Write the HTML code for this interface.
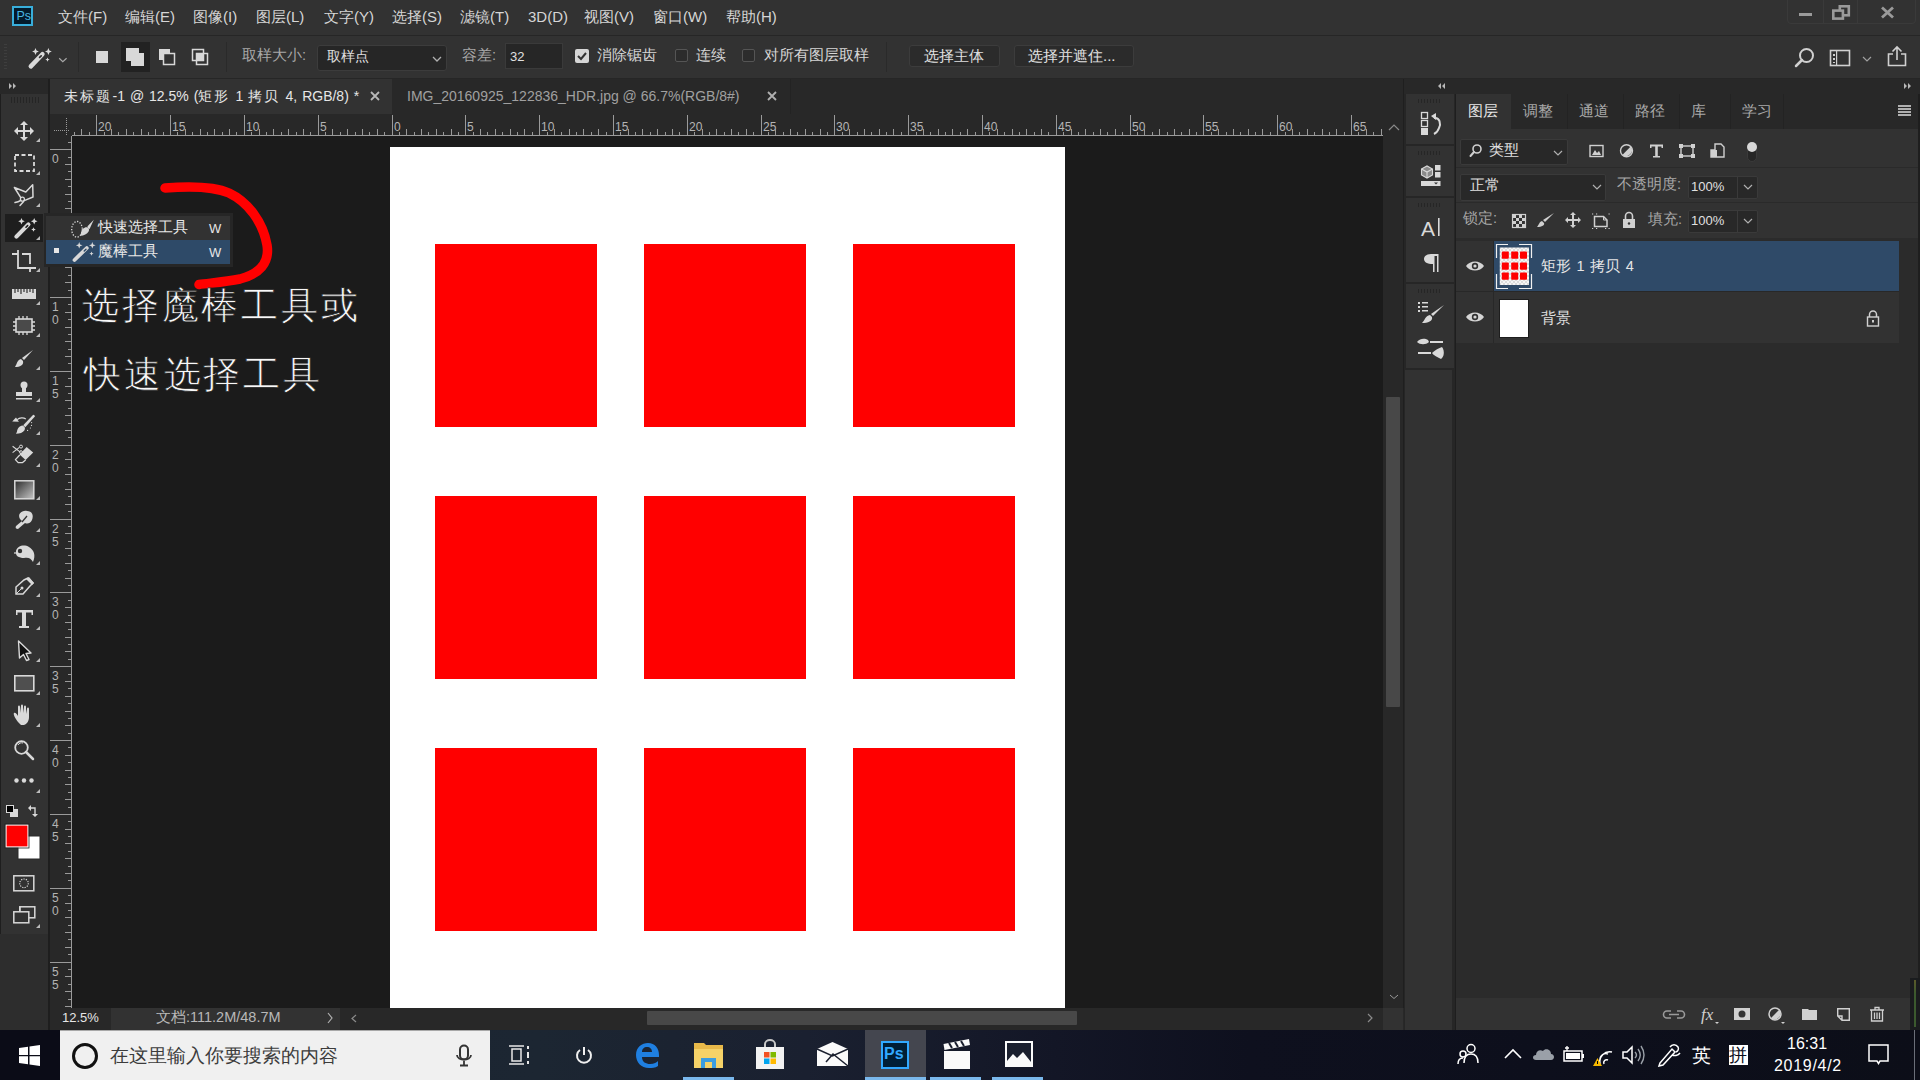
<!DOCTYPE html>
<html><head><meta charset="utf-8"><style>
*{margin:0;padding:0;box-sizing:border-box}
html,body{width:1920px;height:1080px;overflow:hidden;background:#1e1e1e;font-family:'Liberation Sans',sans-serif;}
.a{position:absolute}
.t{position:absolute;white-space:nowrap;line-height:1}
svg{display:block}
</style></head><body>

<div class="a" style="left:0;top:0;width:1920px;height:35px;background:#323232"></div>
<div class="a" style="left:0;top:35px;width:1920px;height:1px;background:#262626"></div>
<div class="a" style="left:12px;top:6px;width:20.5px;height:20px;background:#041a2a;border:2px solid #38aedb"></div>
<div class="t" style="left:16.5px;top:9.5px;font-size:12.5px;color:#48b6e2">Ps</div>
<div class="t" style="left:58px;top:9px;font-size:15px;color:#d6d6d6">文件(F)</div>
<div class="t" style="left:125px;top:9px;font-size:15px;color:#d6d6d6">编辑(E)</div>
<div class="t" style="left:193px;top:9px;font-size:15px;color:#d6d6d6">图像(I)</div>
<div class="t" style="left:256px;top:9px;font-size:15px;color:#d6d6d6">图层(L)</div>
<div class="t" style="left:324px;top:9px;font-size:15px;color:#d6d6d6">文字(Y)</div>
<div class="t" style="left:392px;top:9px;font-size:15px;color:#d6d6d6">选择(S)</div>
<div class="t" style="left:460px;top:9px;font-size:15px;color:#d6d6d6">滤镜(T)</div>
<div class="t" style="left:528px;top:9px;font-size:15px;color:#d6d6d6">3D(D)</div>
<div class="t" style="left:584px;top:9px;font-size:15px;color:#d6d6d6">视图(V)</div>
<div class="t" style="left:653px;top:9px;font-size:15px;color:#d6d6d6">窗口(W)</div>
<div class="t" style="left:726px;top:9px;font-size:15px;color:#d6d6d6">帮助(H)</div>
<div class="a" style="left:1787px;top:-4px;width:129px;height:28px;border:1px solid #3a3a3a;border-radius:4px"></div>
<div class="a" style="left:1823px;top:0;width:1px;height:23px;background:#3a3a3a"></div>
<div class="a" style="left:1857px;top:0;width:1px;height:23px;background:#3a3a3a"></div>
<div class="a" style="left:1799px;top:13px;width:13px;height:3px;background:#9a9a9a"></div>
<svg class="a" style="left:1830px;top:3px" width="22" height="19" viewBox="1830 3 22 19"><rect x="1839.8" y="6.3" width="9" height="9" fill="none" stroke="#9a9a9a" stroke-width="2.6"/><rect x="1833.3" y="10.6" width="9.6" height="8" fill="#323232" stroke="#9a9a9a" stroke-width="2.6"/></svg>
<svg class="a" style="left:1880px;top:6px" width="15" height="13"><path d="M2 1.5L13 11.5M13 1.5L2 11.5" stroke="#9a9a9a" stroke-width="2.8"/></svg>
<div class="a" style="left:0;top:36px;width:1920px;height:42px;background:#323232"></div>
<div class="a" style="left:0;top:78px;width:1920px;height:1px;background:#262626"></div>
<div class="a" style="left:4px;top:44px;width:3px;height:26px;background:repeating-linear-gradient(#3e3e3e 0 1px,transparent 1px 3px)"></div>
<svg class="a" style="left:0;top:36px" width="80" height="42" viewBox="0 36 80 42"><path d="M30.8 66.4 L42.4 54.2" stroke="#d9d9d9" stroke-width="4.5" stroke-linecap="round"/><path d="M39.6 57.4 L41.2 55.8" stroke="#323232" stroke-width="1.71" stroke-linecap="round"/><path d="M35.50 48.10 L36.52 50.48 L38.90 51.50 L36.52 52.52 L35.50 54.90 L34.48 52.52 L32.10 51.50 L34.48 50.48Z M48.40 48.10 L49.42 50.48 L51.80 51.50 L49.42 52.52 L48.40 54.90 L47.38 52.52 L45.00 51.50 L47.38 50.48Z M47.50 57.40 L48.16 58.94 L49.70 59.60 L48.16 60.26 L47.50 61.80 L46.84 60.26 L45.30 59.60 L46.84 58.94Z" fill="#d9d9d9"/><path d="M59.2 58.3 L62.8 61.6 L66.6 58.3" fill="none" stroke="#a8a8a8" stroke-width="1.2"/></svg>
<div class="a" style="left:78px;top:42px;width:1px;height:30px;background:#2a2a2a"></div>
<div class="a" style="left:96px;top:51px;width:12px;height:12px;background:#d8d8d8"></div>
<div class="a" style="left:121px;top:42px;width:29px;height:30px;background:#222"></div>
<div class="a" style="left:126px;top:48px;width:13px;height:13px;background:#d8d8d8"></div>
<div class="a" style="left:131px;top:53px;width:13px;height:13px;background:#d8d8d8"></div>
<svg class="a" style="left:158px;top:48px" width="18" height="18"><rect x="1" y="1" width="11" height="11" fill="#d8d8d8"/><rect x="5.5" y="5.5" width="11" height="11" fill="#323232" stroke="#d8d8d8" stroke-width="1.5"/></svg>
<svg class="a" style="left:191px;top:48px" width="18" height="18"><rect x="1.5" y="1.5" width="11" height="11" fill="none" stroke="#d8d8d8" stroke-width="1.5"/><rect x="5.5" y="5.5" width="11" height="11" fill="none" stroke="#d8d8d8" stroke-width="1.5"/><rect x="5.5" y="5.5" width="7" height="7" fill="#d8d8d8"/></svg>
<div class="a" style="left:226px;top:42px;width:1px;height:30px;background:#2a2a2a"></div>
<div class="t" style="left:242px;top:48px;font-size:14.7px;color:#a8a8a8">取样大小:</div>
<div class="a" style="left:317px;top:45px;width:130px;height:26px;background:#262626;border:1px solid #3c3c3c;border-radius:3px"></div>
<div class="t" style="left:327px;top:49px;font-size:14px;color:#e0e0e0">取样点</div>
<svg class="a" style="left:432px;top:56px" width="10" height="7"><path d="M1 1L5 5L9 1" fill="none" stroke="#b0b0b0" stroke-width="1.3"/></svg>
<div class="t" style="left:462px;top:48px;font-size:14.7px;color:#a8a8a8">容差:</div>
<div class="a" style="left:505px;top:43px;width:58px;height:26px;background:#262626;border:1px solid #3a3a3a"></div>
<div class="t" style="left:510px;top:50px;font-size:13px;color:#e0e0e0">32</div>
<div class="a" style="left:575px;top:49px;width:14px;height:14px;background:#d6d6d6;border-radius:2px"></div>
<svg class="a" style="left:575px;top:49px" width="14" height="14"><path d="M3 7L6 10L11 4" fill="none" stroke="#333" stroke-width="2"/></svg>
<div class="t" style="left:597px;top:48px;font-size:14.7px;color:#d6d6d6">消除锯齿</div>
<div class="a" style="left:675px;top:49px;width:13px;height:13px;border:1px solid #555;border-radius:2px;background:#2c2c2c"></div>
<div class="t" style="left:696px;top:48px;font-size:14.7px;color:#d6d6d6">连续</div>
<div class="a" style="left:742px;top:49px;width:13px;height:13px;border:1px solid #555;border-radius:2px;background:#2c2c2c"></div>
<div class="t" style="left:764px;top:48px;font-size:14.7px;color:#d6d6d6">对所有图层取样</div>
<div class="a" style="left:886px;top:42px;width:1px;height:30px;background:#2a2a2a"></div>
<div class="a" style="left:909px;top:45px;width:91px;height:22px;background:#2b2b2b;border:1px solid #3c3c3c;border-radius:3px"></div>
<div class="t" style="left:924px;top:48px;font-size:15px;color:#e0e0e0">选择主体</div>
<div class="a" style="left:1014px;top:45px;width:120px;height:22px;background:#2b2b2b;border:1px solid #3c3c3c;border-radius:3px"></div>
<div class="t" style="left:1028px;top:48px;font-size:15px;color:#e0e0e0">选择并遮住...</div>
<svg class="a" style="left:1794px;top:47px" width="22" height="21"><circle cx="12.5" cy="8.5" r="6.5" fill="none" stroke="#d0d0d0" stroke-width="2"/><path d="M8 13L2 19" stroke="#d0d0d0" stroke-width="2.5" stroke-linecap="round"/></svg>
<svg class="a" style="left:1829px;top:49px" width="23" height="18"><rect x="1.5" y="1.5" width="19" height="15" fill="none" stroke="#d0d0d0" stroke-width="1.6"/><rect x="4" y="5" width="2" height="2" fill="#d0d0d0"/><rect x="4" y="9" width="2" height="2" fill="#d0d0d0"/><rect x="4" y="13" width="2" height="1" fill="#d0d0d0"/><rect x="7" y="2" width="1.2" height="14" fill="#d0d0d0"/></svg>
<svg class="a" style="left:1862px;top:56px" width="10" height="7"><path d="M1 1L5 5L9 1" fill="none" stroke="#a0a0a0" stroke-width="1.2"/></svg>
<svg class="a" style="left:1886px;top:45px" width="22" height="22"><path d="M7 9H2.5V20.5H19.5V9H15" fill="none" stroke="#d0d0d0" stroke-width="1.6"/><path d="M11 15V2M6.5 6.5L11 2L15.5 6.5" fill="none" stroke="#d0d0d0" stroke-width="1.6"/></svg>
<div class="a" style="left:0;top:79px;width:48px;height:15px;background:#282828"></div>
<svg class="a" style="left:9px;top:83px" width="8" height="6"><path d="M0 0L3 3L0 6ZM4 0L7 3L4 6Z" fill="#b8b8b8"/></svg>
<div class="a" style="left:1px;top:94px;width:47px;height:840px;background:#323232"></div>
<div class="a" style="left:0;top:934px;width:48px;height:96px;background:#2d2d2d"></div>
<div class="a" style="left:11px;top:96.5px;width:29px;height:6px;background:repeating-linear-gradient(90deg,#252525 0 1.2px,transparent 1.2px 3px)"></div>
<svg class="a" style="left:0;top:0" width="48" height="940" viewBox="0 0 48 940">
<g fill="#d9d9d9" stroke="none">
<!-- wand selected bg -->
<rect x="5" y="214" width="38" height="28" fill="#1e1e1e"/>
<!-- triangles -->
<path d="M40 138v4h-4z M40 171v4h-4z M40 203v4h-4z M40 236v4h-4z M40 268v4h-4z M40 301v4h-4z M40 333v4h-4z M40 366v4h-4z M40 398v4h-4z M40 431v4h-4z M40 463v4h-4z M40 496v4h-4z M40 528v4h-4z M40 561v4h-4z M40 593v4h-4z M40 626v4h-4z M40 658v4h-4z M40 691v4h-4z M40 723v4h-4z M40 789v4h-4z M40 924v4h-4z" fill="#bcbcbc"/>
<!-- move -->
<path d="M24 121l4 4h-3v5h5v-3l4 4-4 4v-3h-5v5h3l-4 4-4-4h3v-5h-5v3l-4-4 4-4v3h5v-5h-3z"/>
</g>
<!-- marquee -->
<rect x="15" y="155" width="19" height="16" fill="none" stroke="#d9d9d9" stroke-width="1.8" stroke-dasharray="4 2.5"/>
<!-- lasso -->
<path d="M14.4 187.5 L25.8 192 L32.7 184.7 L33 197 L24.2 200.6 M14.4 187.5 L20.6 197.4 M20.8 200.4 C 19 201.6 17 202.3 15 202.6 M23.6 201.4 L20 205.5" fill="none" stroke="#d9d9d9" stroke-width="1.5" stroke-linejoin="round" stroke-linecap="round"/>
<circle cx="22.4" cy="199.2" r="2" fill="none" stroke="#d9d9d9" stroke-width="1.3"/>
<!-- wand -->
<path d="M16.4 236.6 L28.4 224.4" stroke="#d9d9d9" stroke-width="4.2" stroke-linecap="round"/><path d="M26 227.2 L27.6 225.6" stroke="#1e1e1e" stroke-width="1.60" stroke-linecap="round"/><path d="M21.50 217.90 L22.49 220.21 L24.80 221.20 L22.49 222.19 L21.50 224.50 L20.51 222.19 L18.20 221.20 L20.51 220.21Z M34.20 217.90 L35.19 220.21 L37.50 221.20 L35.19 222.19 L34.20 224.50 L33.21 222.19 L30.90 221.20 L33.21 220.21Z M33.50 227.20 L34.19 228.81 L35.80 229.50 L34.19 230.19 L33.50 231.80 L32.81 230.19 L31.20 229.50 L32.81 228.81Z" fill="#d9d9d9"/>
<!-- crop -->
<path d="M12 254H18V268H34 M18 250V254 M30 272V268 M22 254H30V264 M32 268H36" fill="none" stroke="#d9d9d9" stroke-width="1.8"/>
<!-- ruler -->
<rect x="12" y="289" width="24" height="10" fill="#d9d9d9"/>
<path d="M15 289v4 M18 289v3 M21 289v5 M24 289v3 M27 289v4 M30 289v3 M33 289v4" stroke="#323232" stroke-width="1.2"/>
<!-- frame tool -->
<rect x="16" y="319" width="16" height="13" fill="#4a4a4a" stroke="#d9d9d9" stroke-width="1.6"/>
<path d="M19 316v3M23 316v3M27 316v3M19 332v3M23 332v3M27 332v3M13 322h3M13 326h3M13 330h3M32 322h3M32 326h3M32 330h3" stroke="#d9d9d9" stroke-width="1.3"/>
<!-- brush -->
<path d="M33 350 L24 360 L22 358 Z" fill="#d9d9d9"/>
<path d="M21 359 C 17 360 17 364 15 367 C 20 367 24 365 23 361 Z" fill="#d9d9d9"/>
<!-- stamp -->
<circle cx="24" cy="385" r="3.5" fill="#d9d9d9"/>
<path d="M22 387h4v5h6v4h-16v-4h6z" fill="#d9d9d9"/>
<rect x="16" y="398" width="16" height="1.5" fill="#d9d9d9"/>
<!-- history brush -->
<path d="M33.2 414.8 C 34.5 415 35 415.8 34.8 416.6 L25.3 427.2 L23.2 425.2Z" fill="#d9d9d9"/>
<path d="M22.6 425.6 C 19.2 426 17.6 428.8 17.1 431 C 16.8 432.4 16.5 433 15.9 433.8 C 19.2 433.9 23 432.6 24.5 430.2 C 25.5 428.5 25 426.6 22.6 425.6Z" fill="#d9d9d9"/>
<path d="M12.2 421.6 L16 417.4 L18.9 421.8Z" fill="#d9d9d9"/>
<path d="M17.2 419.6 C 19.6 417.6 23.4 417.2 25.8 419" fill="none" stroke="#d9d9d9" stroke-width="1.2"/>
<circle cx="31.6" cy="422.6" r="0.6" fill="#d9d9d9"/><circle cx="31.5" cy="425.4" r="0.6" fill="#d9d9d9"/><circle cx="30.4" cy="428" r="0.6" fill="#d9d9d9"/><circle cx="27.6" cy="430.4" r="0.6" fill="#d9d9d9"/>
<!-- eraser -->
<path d="M12.6 446.2 L20.6 452.4 M12.6 452.6 L19.4 447.4" stroke="#d9d9d9" stroke-width="1.1"/>
<circle cx="21" cy="446.6" r="1.5" fill="none" stroke="#d9d9d9" stroke-width="1"/><circle cx="21" cy="452.2" r="1.5" fill="none" stroke="#d9d9d9" stroke-width="1"/>
<path d="M26.6 447 L33.2 452.6 L25.6 460 L19.6 454.6Z" fill="#d9d9d9"/>
<path d="M19.8 455 L15.4 459.6 L18.2 462.6 H22.6 L25.6 460" fill="none" stroke="#d9d9d9" stroke-width="1.3" stroke-linejoin="round"/>
<!-- gradient -->
<defs><linearGradient id="gr" x1="0" y1="0" x2="1" y2="1"><stop offset="0" stop-color="#2a2a2a"/><stop offset="1" stop-color="#c8c8c8"/></linearGradient></defs>
<rect x="14.8" y="480.8" width="19" height="18" fill="url(#gr)" stroke="#d9d9d9" stroke-width="1.5"/>
<!-- smudge/blur -->
<path d="M20 519 C 17 514 22 510 27 511 C 32 511 34 515 32 520 C 30 524 27 524 25 523 L 18 529 C 16 529 15 528 16 526 L 22 521 Z" fill="#d9d9d9"/>
<path d="M22 522 L27 516" stroke="#323232" stroke-width="1.3"/>
<!-- dodge -->
<path d="M16 551 C 17 546 24 544 29 547 C 34 550 36 555 33 562 C 31 558 28 557 24 558 C 19 558 15 556 16 551 Z" fill="#d9d9d9"/>
<circle cx="20" cy="551" r="2.2" fill="#323232"/>
<path d="M14 553h3" stroke="#d9d9d9" stroke-width="1.2"/>
<!-- pen -->
<path d="M28 578 L33 583 L30 586 L23 594 L16 594 L16 587 L24 580 Z" fill="none" stroke="#d9d9d9" stroke-width="1.5"/>
<path d="M26 579 L32 585 L34 583 L29 577Z" fill="#d9d9d9"/>
<circle cx="22" cy="588" r="1.5" fill="#d9d9d9"/><path d="M16 594 L21 589" stroke="#d9d9d9" stroke-width="1"/>
<!-- type T -->
<path d="M16 610H33V615H31.5V612.5H26V626H29V628H19V626H22V612.5H17.5V615H16Z" fill="#d9d9d9"/>
<!-- path select arrow -->
<path d="M18.5 641 L31 653 L26 653.5 L29 659.5 L26.5 660.5 L23.5 654.5 L19.5 658Z" fill="#111" stroke="#d9d9d9" stroke-width="1.4" stroke-linejoin="round"/>
<!-- rectangle -->
<rect x="14.8" y="675.8" width="19" height="15" fill="#4f4f4f" stroke="#d9d9d9" stroke-width="1.6"/>
<!-- hand -->
<path d="M18 722 C 15 718 13 714 14 713 C 15 712 17 714 18 716 L 18 707 C 18 705 20 705 20 707 L 20 713 L 21 706 C 21 704 23 704 23 706 L 23 713 L 24 707 C 24 705 26 705 26 707 L 26 714 L 27 709 C 27 707 29 707 29 709 L 29 717 C 29 721 27 724 24 725 L 21 725 Z" fill="#d9d9d9"/>
<!-- zoom -->
<circle cx="21.5" cy="747.5" r="6.3" fill="none" stroke="#d9d9d9" stroke-width="1.8"/>
<path d="M26 752 L33 759" stroke="#d9d9d9" stroke-width="2.5" stroke-linecap="round"/>
<path d="M18 745 C 19 743 21 742.5 23 743" fill="none" stroke="#d9d9d9" stroke-width="1"/>
<!-- more -->
<circle cx="16.5" cy="780.5" r="2.2" fill="#d9d9d9"/><circle cx="24" cy="780.5" r="2.2" fill="#d9d9d9"/><circle cx="31.5" cy="780.5" r="2.2" fill="#d9d9d9"/>
<!-- default colors -->
<rect x="10" y="809" width="8" height="8" fill="#d9d9d9"/>
<rect x="6.5" y="805.5" width="7" height="7" fill="#000" stroke="#d9d9d9" stroke-width="1"/>
<!-- swap -->
<path d="M29 808 H35 V815" fill="none" stroke="#d9d9d9" stroke-width="1.4"/>
<path d="M28 808 L31 805 V811Z M35 817 L32 814 H38Z" fill="#d9d9d9"/>
<!-- bg / fg -->
<rect x="18" y="836" width="22" height="23" fill="#fff" stroke="#2a2a2a" stroke-width="1"/>
<rect x="6" y="825" width="22" height="22" fill="#ff0000" stroke="#fff" stroke-width="1.2"/>
<rect x="5" y="824" width="24" height="24" fill="none" stroke="#222" stroke-width="0.8"/>
<!-- quick mask -->
<rect x="13.8" y="875.8" width="20" height="15" fill="none" stroke="#d9d9d9" stroke-width="1.5"/>
<circle cx="24" cy="883.3" r="4.3" fill="none" stroke="#d9d9d9" stroke-width="1.2" stroke-dasharray="1.2 1.2"/>
<!-- screen mode -->
<rect x="19.8" y="906.8" width="15" height="11" fill="#323232" stroke="#d9d9d9" stroke-width="1.5"/>
<rect x="13.8" y="911.8" width="15" height="11" fill="#323232" stroke="#d9d9d9" stroke-width="1.5"/>
<path d="M19.8 911.8V906.8" stroke="#d9d9d9" stroke-width="1.5"/>
</svg>

<div class="a" style="left:50px;top:79px;width:1354px;height:35px;background:#282828"></div>
<div class="a" style="left:50px;top:79px;width:342px;height:35px;background:#323232"></div>
<div class="t" style="left:64px;top:89px;font-size:14px;color:#e6e6e6;word-spacing:1px"><span style="letter-spacing:2.2px">未标题</span>-1 @ 12.5% (<span style="letter-spacing:2.2px">矩形</span> 1 <span style="letter-spacing:2.2px">拷贝</span> 4, RGB/8) *</div>
<svg class="a" style="left:370px;top:91px" width="10" height="10"><path d="M1 1L9 9M9 1L1 9" stroke="#b8b8b8" stroke-width="1.8"/></svg>
<div class="a" style="left:790px;top:79px;width:1px;height:35px;background:#232323"></div>
<div class="t" style="left:407px;top:89px;font-size:14px;color:#a0a0a0">IMG_20160925_122836_HDR.jpg @ 66.7%(RGB/8#)</div>
<svg class="a" style="left:767px;top:91px" width="10" height="10"><path d="M1 1L9 9M9 1L1 9" stroke="#b0b0b0" stroke-width="1.8"/></svg>
<div class="a" style="left:50px;top:114px;width:1354px;height:22px;background:#282828"></div>
<div class="a" style="left:50px;top:136px;width:22px;height:872px;background:#282828"></div>
<div class="a" style="left:72px;top:136px;width:1311px;height:872px;background:#1b1b1b"></div>
<div class="a" style="left:1383px;top:114px;width:21px;height:894px;background:#282828"></div>
<div class="a" style="left:1403px;top:79px;width:2px;height:951px;background:#1f1f1f"></div>
<svg width="1311" height="22" style="position:absolute;left:72px;top:114px;font-family:'Liberation Sans',sans-serif;"><rect x="2.0" y="18" width="1" height="4" fill="#9a9a9a"/><rect x="9.0" y="15" width="1" height="7" fill="#9a9a9a"/><rect x="17.0" y="18" width="1" height="4" fill="#9a9a9a"/><rect x="24.0" y="1" width="1" height="21" fill="#9a9a9a"/><text x="26" y="16.8" fill="#b4b4b4" font-size="12">20</text><rect x="32.0" y="18" width="1" height="4" fill="#9a9a9a"/><rect x="39.0" y="15" width="1" height="7" fill="#9a9a9a"/><rect x="46.0" y="18" width="1" height="4" fill="#9a9a9a"/><rect x="54.0" y="15" width="1" height="7" fill="#9a9a9a"/><rect x="61.0" y="18" width="1" height="4" fill="#9a9a9a"/><rect x="69.0" y="15" width="1" height="7" fill="#9a9a9a"/><rect x="76.0" y="18" width="1" height="4" fill="#9a9a9a"/><rect x="83.0" y="15" width="1" height="7" fill="#9a9a9a"/><rect x="91.0" y="18" width="1" height="4" fill="#9a9a9a"/><rect x="98.0" y="1" width="1" height="21" fill="#9a9a9a"/><text x="100" y="16.8" fill="#b4b4b4" font-size="12">15</text><rect x="105.0" y="18" width="1" height="4" fill="#9a9a9a"/><rect x="113.0" y="15" width="1" height="7" fill="#9a9a9a"/><rect x="120.0" y="18" width="1" height="4" fill="#9a9a9a"/><rect x="128.0" y="15" width="1" height="7" fill="#9a9a9a"/><rect x="135.0" y="18" width="1" height="4" fill="#9a9a9a"/><rect x="142.0" y="15" width="1" height="7" fill="#9a9a9a"/><rect x="150.0" y="18" width="1" height="4" fill="#9a9a9a"/><rect x="157.0" y="15" width="1" height="7" fill="#9a9a9a"/><rect x="164.0" y="18" width="1" height="4" fill="#9a9a9a"/><rect x="172.0" y="1" width="1" height="21" fill="#9a9a9a"/><text x="174" y="16.8" fill="#b4b4b4" font-size="12">10</text><rect x="179.0" y="18" width="1" height="4" fill="#9a9a9a"/><rect x="187.0" y="15" width="1" height="7" fill="#9a9a9a"/><rect x="194.0" y="18" width="1" height="4" fill="#9a9a9a"/><rect x="201.0" y="15" width="1" height="7" fill="#9a9a9a"/><rect x="209.0" y="18" width="1" height="4" fill="#9a9a9a"/><rect x="216.0" y="15" width="1" height="7" fill="#9a9a9a"/><rect x="224.0" y="18" width="1" height="4" fill="#9a9a9a"/><rect x="231.0" y="15" width="1" height="7" fill="#9a9a9a"/><rect x="238.0" y="18" width="1" height="4" fill="#9a9a9a"/><rect x="246.0" y="1" width="1" height="21" fill="#9a9a9a"/><text x="248" y="16.8" fill="#b4b4b4" font-size="12">5</text><rect x="253.0" y="18" width="1" height="4" fill="#9a9a9a"/><rect x="260.0" y="15" width="1" height="7" fill="#9a9a9a"/><rect x="268.0" y="18" width="1" height="4" fill="#9a9a9a"/><rect x="275.0" y="15" width="1" height="7" fill="#9a9a9a"/><rect x="283.0" y="18" width="1" height="4" fill="#9a9a9a"/><rect x="290.0" y="15" width="1" height="7" fill="#9a9a9a"/><rect x="297.0" y="18" width="1" height="4" fill="#9a9a9a"/><rect x="305.0" y="15" width="1" height="7" fill="#9a9a9a"/><rect x="312.0" y="18" width="1" height="4" fill="#9a9a9a"/><rect x="320.0" y="1" width="1" height="21" fill="#9a9a9a"/><text x="322" y="16.8" fill="#b4b4b4" font-size="12">0</text><rect x="327.0" y="18" width="1" height="4" fill="#9a9a9a"/><rect x="334.0" y="15" width="1" height="7" fill="#9a9a9a"/><rect x="342.0" y="18" width="1" height="4" fill="#9a9a9a"/><rect x="349.0" y="15" width="1" height="7" fill="#9a9a9a"/><rect x="356.0" y="18" width="1" height="4" fill="#9a9a9a"/><rect x="364.0" y="15" width="1" height="7" fill="#9a9a9a"/><rect x="371.0" y="18" width="1" height="4" fill="#9a9a9a"/><rect x="379.0" y="15" width="1" height="7" fill="#9a9a9a"/><rect x="386.0" y="18" width="1" height="4" fill="#9a9a9a"/><rect x="393.0" y="1" width="1" height="21" fill="#9a9a9a"/><text x="395" y="16.8" fill="#b4b4b4" font-size="12">5</text><rect x="401.0" y="18" width="1" height="4" fill="#9a9a9a"/><rect x="408.0" y="15" width="1" height="7" fill="#9a9a9a"/><rect x="415.0" y="18" width="1" height="4" fill="#9a9a9a"/><rect x="423.0" y="15" width="1" height="7" fill="#9a9a9a"/><rect x="430.0" y="18" width="1" height="4" fill="#9a9a9a"/><rect x="438.0" y="15" width="1" height="7" fill="#9a9a9a"/><rect x="445.0" y="18" width="1" height="4" fill="#9a9a9a"/><rect x="452.0" y="15" width="1" height="7" fill="#9a9a9a"/><rect x="460.0" y="18" width="1" height="4" fill="#9a9a9a"/><rect x="467.0" y="1" width="1" height="21" fill="#9a9a9a"/><text x="469" y="16.8" fill="#b4b4b4" font-size="12">10</text><rect x="475.0" y="18" width="1" height="4" fill="#9a9a9a"/><rect x="482.0" y="15" width="1" height="7" fill="#9a9a9a"/><rect x="489.0" y="18" width="1" height="4" fill="#9a9a9a"/><rect x="497.0" y="15" width="1" height="7" fill="#9a9a9a"/><rect x="504.0" y="18" width="1" height="4" fill="#9a9a9a"/><rect x="511.0" y="15" width="1" height="7" fill="#9a9a9a"/><rect x="519.0" y="18" width="1" height="4" fill="#9a9a9a"/><rect x="526.0" y="15" width="1" height="7" fill="#9a9a9a"/><rect x="534.0" y="18" width="1" height="4" fill="#9a9a9a"/><rect x="541.0" y="1" width="1" height="21" fill="#9a9a9a"/><text x="543" y="16.8" fill="#b4b4b4" font-size="12">15</text><rect x="548.0" y="18" width="1" height="4" fill="#9a9a9a"/><rect x="556.0" y="15" width="1" height="7" fill="#9a9a9a"/><rect x="563.0" y="18" width="1" height="4" fill="#9a9a9a"/><rect x="570.0" y="15" width="1" height="7" fill="#9a9a9a"/><rect x="578.0" y="18" width="1" height="4" fill="#9a9a9a"/><rect x="585.0" y="15" width="1" height="7" fill="#9a9a9a"/><rect x="593.0" y="18" width="1" height="4" fill="#9a9a9a"/><rect x="600.0" y="15" width="1" height="7" fill="#9a9a9a"/><rect x="607.0" y="18" width="1" height="4" fill="#9a9a9a"/><rect x="615.0" y="1" width="1" height="21" fill="#9a9a9a"/><text x="617" y="16.8" fill="#b4b4b4" font-size="12">20</text><rect x="622.0" y="18" width="1" height="4" fill="#9a9a9a"/><rect x="630.0" y="15" width="1" height="7" fill="#9a9a9a"/><rect x="637.0" y="18" width="1" height="4" fill="#9a9a9a"/><rect x="644.0" y="15" width="1" height="7" fill="#9a9a9a"/><rect x="652.0" y="18" width="1" height="4" fill="#9a9a9a"/><rect x="659.0" y="15" width="1" height="7" fill="#9a9a9a"/><rect x="666.0" y="18" width="1" height="4" fill="#9a9a9a"/><rect x="674.0" y="15" width="1" height="7" fill="#9a9a9a"/><rect x="681.0" y="18" width="1" height="4" fill="#9a9a9a"/><rect x="689.0" y="1" width="1" height="21" fill="#9a9a9a"/><text x="691" y="16.8" fill="#b4b4b4" font-size="12">25</text><rect x="696.0" y="18" width="1" height="4" fill="#9a9a9a"/><rect x="703.0" y="15" width="1" height="7" fill="#9a9a9a"/><rect x="711.0" y="18" width="1" height="4" fill="#9a9a9a"/><rect x="718.0" y="15" width="1" height="7" fill="#9a9a9a"/><rect x="725.0" y="18" width="1" height="4" fill="#9a9a9a"/><rect x="733.0" y="15" width="1" height="7" fill="#9a9a9a"/><rect x="740.0" y="18" width="1" height="4" fill="#9a9a9a"/><rect x="748.0" y="15" width="1" height="7" fill="#9a9a9a"/><rect x="755.0" y="18" width="1" height="4" fill="#9a9a9a"/><rect x="762.0" y="1" width="1" height="21" fill="#9a9a9a"/><text x="764" y="16.8" fill="#b4b4b4" font-size="12">30</text><rect x="770.0" y="18" width="1" height="4" fill="#9a9a9a"/><rect x="777.0" y="15" width="1" height="7" fill="#9a9a9a"/><rect x="785.0" y="18" width="1" height="4" fill="#9a9a9a"/><rect x="792.0" y="15" width="1" height="7" fill="#9a9a9a"/><rect x="799.0" y="18" width="1" height="4" fill="#9a9a9a"/><rect x="807.0" y="15" width="1" height="7" fill="#9a9a9a"/><rect x="814.0" y="18" width="1" height="4" fill="#9a9a9a"/><rect x="821.0" y="15" width="1" height="7" fill="#9a9a9a"/><rect x="829.0" y="18" width="1" height="4" fill="#9a9a9a"/><rect x="836.0" y="1" width="1" height="21" fill="#9a9a9a"/><text x="838" y="16.8" fill="#b4b4b4" font-size="12">35</text><rect x="844.0" y="18" width="1" height="4" fill="#9a9a9a"/><rect x="851.0" y="15" width="1" height="7" fill="#9a9a9a"/><rect x="858.0" y="18" width="1" height="4" fill="#9a9a9a"/><rect x="866.0" y="15" width="1" height="7" fill="#9a9a9a"/><rect x="873.0" y="18" width="1" height="4" fill="#9a9a9a"/><rect x="880.0" y="15" width="1" height="7" fill="#9a9a9a"/><rect x="888.0" y="18" width="1" height="4" fill="#9a9a9a"/><rect x="895.0" y="15" width="1" height="7" fill="#9a9a9a"/><rect x="903.0" y="18" width="1" height="4" fill="#9a9a9a"/><rect x="910.0" y="1" width="1" height="21" fill="#9a9a9a"/><text x="912" y="16.8" fill="#b4b4b4" font-size="12">40</text><rect x="917.0" y="18" width="1" height="4" fill="#9a9a9a"/><rect x="925.0" y="15" width="1" height="7" fill="#9a9a9a"/><rect x="932.0" y="18" width="1" height="4" fill="#9a9a9a"/><rect x="940.0" y="15" width="1" height="7" fill="#9a9a9a"/><rect x="947.0" y="18" width="1" height="4" fill="#9a9a9a"/><rect x="954.0" y="15" width="1" height="7" fill="#9a9a9a"/><rect x="962.0" y="18" width="1" height="4" fill="#9a9a9a"/><rect x="969.0" y="15" width="1" height="7" fill="#9a9a9a"/><rect x="976.0" y="18" width="1" height="4" fill="#9a9a9a"/><rect x="984.0" y="1" width="1" height="21" fill="#9a9a9a"/><text x="986" y="16.8" fill="#b4b4b4" font-size="12">45</text><rect x="991.0" y="18" width="1" height="4" fill="#9a9a9a"/><rect x="999.0" y="15" width="1" height="7" fill="#9a9a9a"/><rect x="1006.0" y="18" width="1" height="4" fill="#9a9a9a"/><rect x="1013.0" y="15" width="1" height="7" fill="#9a9a9a"/><rect x="1021.0" y="18" width="1" height="4" fill="#9a9a9a"/><rect x="1028.0" y="15" width="1" height="7" fill="#9a9a9a"/><rect x="1035.0" y="18" width="1" height="4" fill="#9a9a9a"/><rect x="1043.0" y="15" width="1" height="7" fill="#9a9a9a"/><rect x="1050.0" y="18" width="1" height="4" fill="#9a9a9a"/><rect x="1058.0" y="1" width="1" height="21" fill="#9a9a9a"/><text x="1060" y="16.8" fill="#b4b4b4" font-size="12">50</text><rect x="1065.0" y="18" width="1" height="4" fill="#9a9a9a"/><rect x="1072.0" y="15" width="1" height="7" fill="#9a9a9a"/><rect x="1080.0" y="18" width="1" height="4" fill="#9a9a9a"/><rect x="1087.0" y="15" width="1" height="7" fill="#9a9a9a"/><rect x="1095.0" y="18" width="1" height="4" fill="#9a9a9a"/><rect x="1102.0" y="15" width="1" height="7" fill="#9a9a9a"/><rect x="1109.0" y="18" width="1" height="4" fill="#9a9a9a"/><rect x="1117.0" y="15" width="1" height="7" fill="#9a9a9a"/><rect x="1124.0" y="18" width="1" height="4" fill="#9a9a9a"/><rect x="1131.0" y="1" width="1" height="21" fill="#9a9a9a"/><text x="1133" y="16.8" fill="#b4b4b4" font-size="12">55</text><rect x="1139.0" y="18" width="1" height="4" fill="#9a9a9a"/><rect x="1146.0" y="15" width="1" height="7" fill="#9a9a9a"/><rect x="1154.0" y="18" width="1" height="4" fill="#9a9a9a"/><rect x="1161.0" y="15" width="1" height="7" fill="#9a9a9a"/><rect x="1168.0" y="18" width="1" height="4" fill="#9a9a9a"/><rect x="1176.0" y="15" width="1" height="7" fill="#9a9a9a"/><rect x="1183.0" y="18" width="1" height="4" fill="#9a9a9a"/><rect x="1190.0" y="15" width="1" height="7" fill="#9a9a9a"/><rect x="1198.0" y="18" width="1" height="4" fill="#9a9a9a"/><rect x="1205.0" y="1" width="1" height="21" fill="#9a9a9a"/><text x="1207" y="16.8" fill="#b4b4b4" font-size="12">60</text><rect x="1213.0" y="18" width="1" height="4" fill="#9a9a9a"/><rect x="1220.0" y="15" width="1" height="7" fill="#9a9a9a"/><rect x="1227.0" y="18" width="1" height="4" fill="#9a9a9a"/><rect x="1235.0" y="15" width="1" height="7" fill="#9a9a9a"/><rect x="1242.0" y="18" width="1" height="4" fill="#9a9a9a"/><rect x="1250.0" y="15" width="1" height="7" fill="#9a9a9a"/><rect x="1257.0" y="18" width="1" height="4" fill="#9a9a9a"/><rect x="1264.0" y="15" width="1" height="7" fill="#9a9a9a"/><rect x="1272.0" y="18" width="1" height="4" fill="#9a9a9a"/><rect x="1279.0" y="1" width="1" height="21" fill="#9a9a9a"/><text x="1281" y="16.8" fill="#b4b4b4" font-size="12">65</text><rect x="1286.0" y="18" width="1" height="4" fill="#9a9a9a"/><rect x="1294.0" y="15" width="1" height="7" fill="#9a9a9a"/><rect x="1301.0" y="18" width="1" height="4" fill="#9a9a9a"/><rect x="1309.0" y="15" width="1" height="7" fill="#9a9a9a"/><rect x="0" y="21" width="1311" height="1" fill="#9a9a9a"/></svg>
<svg width="22" height="872" style="position:absolute;left:50px;top:136px;font-family:'Liberation Sans',sans-serif;"><rect x="18" y="6.0" width="4" height="1" fill="#9a9a9a"/><rect x="0" y="13.0" width="22" height="1" fill="#9a9a9a"/><text x="2" y="26.5" fill="#b4b4b4" font-size="12">0</text><rect x="18" y="21.0" width="4" height="1" fill="#9a9a9a"/><rect x="15" y="28.0" width="7" height="1" fill="#9a9a9a"/><rect x="18" y="35.0" width="4" height="1" fill="#9a9a9a"/><rect x="15" y="43.0" width="7" height="1" fill="#9a9a9a"/><rect x="18" y="50.0" width="4" height="1" fill="#9a9a9a"/><rect x="15" y="58.0" width="7" height="1" fill="#9a9a9a"/><rect x="18" y="65.0" width="4" height="1" fill="#9a9a9a"/><rect x="15" y="72.0" width="7" height="1" fill="#9a9a9a"/><rect x="18" y="80.0" width="4" height="1" fill="#9a9a9a"/><rect x="0" y="87.0" width="22" height="1" fill="#9a9a9a"/><text x="2" y="100.5" fill="#b4b4b4" font-size="12">5</text><rect x="18" y="95.0" width="4" height="1" fill="#9a9a9a"/><rect x="15" y="102.0" width="7" height="1" fill="#9a9a9a"/><rect x="18" y="109.0" width="4" height="1" fill="#9a9a9a"/><rect x="15" y="117.0" width="7" height="1" fill="#9a9a9a"/><rect x="18" y="124.0" width="4" height="1" fill="#9a9a9a"/><rect x="15" y="131.0" width="7" height="1" fill="#9a9a9a"/><rect x="18" y="139.0" width="4" height="1" fill="#9a9a9a"/><rect x="15" y="146.0" width="7" height="1" fill="#9a9a9a"/><rect x="18" y="154.0" width="4" height="1" fill="#9a9a9a"/><rect x="0" y="161.0" width="22" height="1" fill="#9a9a9a"/><text x="2" y="174.5" fill="#b4b4b4" font-size="12">1</text><text x="2" y="188.0" fill="#b4b4b4" font-size="12">0</text><rect x="18" y="168.0" width="4" height="1" fill="#9a9a9a"/><rect x="15" y="176.0" width="7" height="1" fill="#9a9a9a"/><rect x="18" y="183.0" width="4" height="1" fill="#9a9a9a"/><rect x="15" y="191.0" width="7" height="1" fill="#9a9a9a"/><rect x="18" y="198.0" width="4" height="1" fill="#9a9a9a"/><rect x="15" y="205.0" width="7" height="1" fill="#9a9a9a"/><rect x="18" y="213.0" width="4" height="1" fill="#9a9a9a"/><rect x="15" y="220.0" width="7" height="1" fill="#9a9a9a"/><rect x="18" y="227.0" width="4" height="1" fill="#9a9a9a"/><rect x="0" y="235.0" width="22" height="1" fill="#9a9a9a"/><text x="2" y="248.5" fill="#b4b4b4" font-size="12">1</text><text x="2" y="262.0" fill="#b4b4b4" font-size="12">5</text><rect x="18" y="242.0" width="4" height="1" fill="#9a9a9a"/><rect x="15" y="250.0" width="7" height="1" fill="#9a9a9a"/><rect x="18" y="257.0" width="4" height="1" fill="#9a9a9a"/><rect x="15" y="264.0" width="7" height="1" fill="#9a9a9a"/><rect x="18" y="272.0" width="4" height="1" fill="#9a9a9a"/><rect x="15" y="279.0" width="7" height="1" fill="#9a9a9a"/><rect x="18" y="287.0" width="4" height="1" fill="#9a9a9a"/><rect x="15" y="294.0" width="7" height="1" fill="#9a9a9a"/><rect x="18" y="301.0" width="4" height="1" fill="#9a9a9a"/><rect x="0" y="309.0" width="22" height="1" fill="#9a9a9a"/><text x="2" y="322.5" fill="#b4b4b4" font-size="12">2</text><text x="2" y="336.0" fill="#b4b4b4" font-size="12">0</text><rect x="18" y="316.0" width="4" height="1" fill="#9a9a9a"/><rect x="15" y="323.0" width="7" height="1" fill="#9a9a9a"/><rect x="18" y="331.0" width="4" height="1" fill="#9a9a9a"/><rect x="15" y="338.0" width="7" height="1" fill="#9a9a9a"/><rect x="18" y="346.0" width="4" height="1" fill="#9a9a9a"/><rect x="15" y="353.0" width="7" height="1" fill="#9a9a9a"/><rect x="18" y="360.0" width="4" height="1" fill="#9a9a9a"/><rect x="15" y="368.0" width="7" height="1" fill="#9a9a9a"/><rect x="18" y="375.0" width="4" height="1" fill="#9a9a9a"/><rect x="0" y="383.0" width="22" height="1" fill="#9a9a9a"/><text x="2" y="396.5" fill="#b4b4b4" font-size="12">2</text><text x="2" y="410.0" fill="#b4b4b4" font-size="12">5</text><rect x="18" y="390.0" width="4" height="1" fill="#9a9a9a"/><rect x="15" y="397.0" width="7" height="1" fill="#9a9a9a"/><rect x="18" y="405.0" width="4" height="1" fill="#9a9a9a"/><rect x="15" y="412.0" width="7" height="1" fill="#9a9a9a"/><rect x="18" y="419.0" width="4" height="1" fill="#9a9a9a"/><rect x="15" y="427.0" width="7" height="1" fill="#9a9a9a"/><rect x="18" y="434.0" width="4" height="1" fill="#9a9a9a"/><rect x="15" y="442.0" width="7" height="1" fill="#9a9a9a"/><rect x="18" y="449.0" width="4" height="1" fill="#9a9a9a"/><rect x="0" y="456.0" width="22" height="1" fill="#9a9a9a"/><text x="2" y="469.5" fill="#b4b4b4" font-size="12">3</text><text x="2" y="483.0" fill="#b4b4b4" font-size="12">0</text><rect x="18" y="464.0" width="4" height="1" fill="#9a9a9a"/><rect x="15" y="471.0" width="7" height="1" fill="#9a9a9a"/><rect x="18" y="479.0" width="4" height="1" fill="#9a9a9a"/><rect x="15" y="486.0" width="7" height="1" fill="#9a9a9a"/><rect x="18" y="493.0" width="4" height="1" fill="#9a9a9a"/><rect x="15" y="501.0" width="7" height="1" fill="#9a9a9a"/><rect x="18" y="508.0" width="4" height="1" fill="#9a9a9a"/><rect x="15" y="515.0" width="7" height="1" fill="#9a9a9a"/><rect x="18" y="523.0" width="4" height="1" fill="#9a9a9a"/><rect x="0" y="530.0" width="22" height="1" fill="#9a9a9a"/><text x="2" y="543.5" fill="#b4b4b4" font-size="12">3</text><text x="2" y="557.0" fill="#b4b4b4" font-size="12">5</text><rect x="18" y="538.0" width="4" height="1" fill="#9a9a9a"/><rect x="15" y="545.0" width="7" height="1" fill="#9a9a9a"/><rect x="18" y="552.0" width="4" height="1" fill="#9a9a9a"/><rect x="15" y="560.0" width="7" height="1" fill="#9a9a9a"/><rect x="18" y="567.0" width="4" height="1" fill="#9a9a9a"/><rect x="15" y="575.0" width="7" height="1" fill="#9a9a9a"/><rect x="18" y="582.0" width="4" height="1" fill="#9a9a9a"/><rect x="15" y="589.0" width="7" height="1" fill="#9a9a9a"/><rect x="18" y="597.0" width="4" height="1" fill="#9a9a9a"/><rect x="0" y="604.0" width="22" height="1" fill="#9a9a9a"/><text x="2" y="617.5" fill="#b4b4b4" font-size="12">4</text><text x="2" y="631.0" fill="#b4b4b4" font-size="12">0</text><rect x="18" y="611.0" width="4" height="1" fill="#9a9a9a"/><rect x="15" y="619.0" width="7" height="1" fill="#9a9a9a"/><rect x="18" y="626.0" width="4" height="1" fill="#9a9a9a"/><rect x="15" y="634.0" width="7" height="1" fill="#9a9a9a"/><rect x="18" y="641.0" width="4" height="1" fill="#9a9a9a"/><rect x="15" y="648.0" width="7" height="1" fill="#9a9a9a"/><rect x="18" y="656.0" width="4" height="1" fill="#9a9a9a"/><rect x="15" y="663.0" width="7" height="1" fill="#9a9a9a"/><rect x="18" y="671.0" width="4" height="1" fill="#9a9a9a"/><rect x="0" y="678.0" width="22" height="1" fill="#9a9a9a"/><text x="2" y="691.5" fill="#b4b4b4" font-size="12">4</text><text x="2" y="705.0" fill="#b4b4b4" font-size="12">5</text><rect x="18" y="685.0" width="4" height="1" fill="#9a9a9a"/><rect x="15" y="693.0" width="7" height="1" fill="#9a9a9a"/><rect x="18" y="700.0" width="4" height="1" fill="#9a9a9a"/><rect x="15" y="707.0" width="7" height="1" fill="#9a9a9a"/><rect x="18" y="715.0" width="4" height="1" fill="#9a9a9a"/><rect x="15" y="722.0" width="7" height="1" fill="#9a9a9a"/><rect x="18" y="730.0" width="4" height="1" fill="#9a9a9a"/><rect x="15" y="737.0" width="7" height="1" fill="#9a9a9a"/><rect x="18" y="744.0" width="4" height="1" fill="#9a9a9a"/><rect x="0" y="752.0" width="22" height="1" fill="#9a9a9a"/><text x="2" y="765.5" fill="#b4b4b4" font-size="12">5</text><text x="2" y="779.0" fill="#b4b4b4" font-size="12">0</text><rect x="18" y="759.0" width="4" height="1" fill="#9a9a9a"/><rect x="15" y="767.0" width="7" height="1" fill="#9a9a9a"/><rect x="18" y="774.0" width="4" height="1" fill="#9a9a9a"/><rect x="15" y="781.0" width="7" height="1" fill="#9a9a9a"/><rect x="18" y="789.0" width="4" height="1" fill="#9a9a9a"/><rect x="15" y="796.0" width="7" height="1" fill="#9a9a9a"/><rect x="18" y="803.0" width="4" height="1" fill="#9a9a9a"/><rect x="15" y="811.0" width="7" height="1" fill="#9a9a9a"/><rect x="18" y="818.0" width="4" height="1" fill="#9a9a9a"/><rect x="0" y="826.0" width="22" height="1" fill="#9a9a9a"/><text x="2" y="839.5" fill="#b4b4b4" font-size="12">5</text><text x="2" y="853.0" fill="#b4b4b4" font-size="12">5</text><rect x="18" y="833.0" width="4" height="1" fill="#9a9a9a"/><rect x="15" y="840.0" width="7" height="1" fill="#9a9a9a"/><rect x="18" y="848.0" width="4" height="1" fill="#9a9a9a"/><rect x="15" y="855.0" width="7" height="1" fill="#9a9a9a"/><rect x="18" y="863.0" width="4" height="1" fill="#9a9a9a"/><rect x="15" y="870.0" width="7" height="1" fill="#9a9a9a"/><rect x="21" y="0" width="1" height="872" fill="#9a9a9a"/></svg>
<div class="a" style="left:54px;top:130px;width:16px;height:1px;background:repeating-linear-gradient(90deg,#9a9a9a 0 1px,transparent 1px 2px)"></div>
<div class="a" style="left:66px;top:118px;width:1px;height:17px;background:repeating-linear-gradient(#9a9a9a 0 1px,transparent 1px 2px)"></div>
<svg class="a" style="left:1388px;top:123px" width="12" height="8"><path d="M1 7L6 2L11 7" fill="none" stroke="#8a8a8a" stroke-width="1.2"/></svg>
<div class="a" style="left:1386px;top:397px;width:14px;height:310px;background:#484848;border-radius:1px"></div>
<svg class="a" style="left:1389px;top:994px" width="10" height="6"><path d="M1 1L5 4.5L9 1" fill="none" stroke="#9a9a9a" stroke-width="1"/></svg>
<div class="a" style="left:390px;top:147px;width:675px;height:861px;background:#fff"></div>
<div class="a" style="left:435px;top:244px;width:162px;height:183px;background:#ff0000"></div>
<div class="a" style="left:435px;top:496px;width:162px;height:183px;background:#ff0000"></div>
<div class="a" style="left:435px;top:748px;width:162px;height:183px;background:#ff0000"></div>
<div class="a" style="left:644px;top:244px;width:162px;height:183px;background:#ff0000"></div>
<div class="a" style="left:644px;top:496px;width:162px;height:183px;background:#ff0000"></div>
<div class="a" style="left:644px;top:748px;width:162px;height:183px;background:#ff0000"></div>
<div class="a" style="left:853px;top:244px;width:162px;height:183px;background:#ff0000"></div>
<div class="a" style="left:853px;top:496px;width:162px;height:183px;background:#ff0000"></div>
<div class="a" style="left:853px;top:748px;width:162px;height:183px;background:#ff0000"></div>
<div class="a" style="left:50px;top:1008px;width:1354px;height:22px;background:#282828"></div>
<div class="a" style="left:111px;top:1008px;width:229px;height:22px;background:#323232"></div>
<div class="t" style="left:62px;top:1011px;font-size:13px;color:#e6e6e6">12.5%</div>
<div class="t" style="left:156px;top:1010px;font-size:14.5px;color:#b8b8b8">文档:111.2M/48.7M</div>
<svg class="a" style="left:327px;top:1012px" width="6" height="12"><path d="M1 1L5 6L1 11" fill="none" stroke="#b0b0b0" stroke-width="1.2"/></svg>
<svg class="a" style="left:351px;top:1014px" width="6" height="9"><path d="M5 1L1 4.5L5 8" fill="none" stroke="#8a8a8a" stroke-width="1.2"/></svg>
<div class="a" style="left:647px;top:1011px;width:430px;height:14px;background:#484848;border-radius:1px"></div>
<div class="a" style="left:1383px;top:1008px;width:20px;height:22px;background:#323232"></div>
<svg class="a" style="left:1367px;top:1013px" width="6" height="10"><path d="M1 1L5 5L1 9" fill="none" stroke="#8a8a8a" stroke-width="1.2"/></svg>
<svg class="a" style="left:0;top:0" width="400" height="400"><path d="M165,188 C190,186 213,186 229,193 C248,202 263,222 267,245 C270,263 259,274 240,279 C225,282 210,283 199,284.5" fill="none" stroke="#ff0000" stroke-width="9.5" stroke-linecap="round"/></svg>
<div class="t" style="left:82px;top:287px;font-size:37px;letter-spacing:2.8px;color:#f8f8f8;-webkit-text-stroke:0.7px #1b1b1b">选择魔棒工具或</div>
<div class="t" style="left:84px;top:356px;font-size:37px;letter-spacing:2.8px;color:#f8f8f8;-webkit-text-stroke:0.7px #1b1b1b">快速选择工具</div>
<div class="a" style="left:44px;top:213px;width:189px;height:54px;background:#262626"></div>
<div class="a" style="left:46px;top:216px;width:184px;height:24px;background:#323232"></div>
<div class="a" style="left:46px;top:240px;width:184px;height:24px;background:#2e4a68"></div>
<div class="t" style="left:98px;top:220px;font-size:14.5px;color:#e6e6e6">快速选择工具</div>
<div class="t" style="left:209px;top:222px;font-size:13px;color:#e6e6e6">W</div>
<div class="a" style="left:54px;top:248px;width:5px;height:5px;background:#e6e6e6"></div>
<div class="t" style="left:98px;top:244px;font-size:14.5px;color:#e6e6e6">魔棒工具</div>
<div class="t" style="left:209px;top:246px;font-size:13px;color:#e6e6e6">W</div>
<svg class="a" style="left:60px;top:214px" width="40" height="52" viewBox="60 214 40 52">
<ellipse cx="77" cy="229.3" rx="5.3" ry="7.8" fill="none" stroke="#d8d8d8" stroke-width="1.3" stroke-dasharray="1.3 1.5"/>
<path d="M93.8 219.8 L89.8 228.6 C 89.5 229 88.8 229 88.4 228.4 L87.6 227.4 C 87.3 227 87.4 226.4 87.8 226 Z" fill="#d8d8d8"/>
<path d="M87.2 227.2 C 84 226.8 81.8 229.4 81.2 232 C 80.9 233.6 80.6 234.8 80.2 235.8 C 83.5 235.9 87.2 234.2 88.6 231.6 C 89.4 230 89.3 228.2 87.2 227.2Z" fill="#d8d8d8"/>
<path d="M74.5 260 L86.8 248" stroke="#d8d8d8" stroke-width="3.8" stroke-linecap="round"/>
<path d="M84.2 251 L86 249.2" stroke="#2e4a68" stroke-width="1.4" stroke-linecap="round"/>
<path d="M79.2 242 L80.1 244.4 L82.5 245.3 L80.1 246.2 L79.2 248.6 L78.3 246.2 L75.9 245.3 L78.3 244.4Z M92.3 242 L93.2 244.4 L95.6 245.3 L93.2 246.2 L92.3 248.6 L91.4 246.2 L89 245.3 L91.4 244.4Z M91.5 251.6 L92.1 253.1 L93.6 253.7 L92.1 254.3 L91.5 255.8 L90.9 254.3 L89.4 253.7 L90.9 253.1Z" fill="#d8d8d8"/>
</svg>
<div class="a" style="left:1404px;top:79px;width:516px;height:15px;background:#282828"></div>
<svg class="a" style="left:1438px;top:83px" width="8" height="6"><path d="M3 0L0 3L3 6ZM7 0L4 3L7 6Z" fill="#b8b8b8"/></svg>
<svg class="a" style="left:1904px;top:83px" width="8" height="6"><path d="M0 0L3 3L0 6ZM4 0L7 3L4 6Z" fill="#b8b8b8"/></svg>
<div class="a" style="left:1404px;top:94px;width:51px;height:936px;background:#262626"></div>
<div class="a" style="left:1405px;top:370px;width:47px;height:660px;background:#323232"></div>
<div class="a" style="left:1406px;top:94px;width:48px;height:50px;background:#323232"></div>
<div class="a" style="left:1418px;top:99px;width:24px;height:4px;background:repeating-linear-gradient(90deg,#262626 0 1px,transparent 1px 3px)"></div>
<div class="a" style="left:1406px;top:146px;width:48px;height:50px;background:#323232"></div>
<div class="a" style="left:1418px;top:151px;width:24px;height:4px;background:repeating-linear-gradient(90deg,#262626 0 1px,transparent 1px 3px)"></div>
<div class="a" style="left:1406px;top:198px;width:48px;height:84px;background:#323232"></div>
<div class="a" style="left:1418px;top:203px;width:24px;height:4px;background:repeating-linear-gradient(90deg,#262626 0 1px,transparent 1px 3px)"></div>
<div class="a" style="left:1406px;top:284px;width:48px;height:84px;background:#323232"></div>
<div class="a" style="left:1418px;top:289px;width:24px;height:4px;background:repeating-linear-gradient(90deg,#262626 0 1px,transparent 1px 3px)"></div>
<svg class="a" style="left:1404px;top:94px" width="52" height="290" viewBox="1404 94 52 290">
<!-- history -->
<rect x="1421.5" y="112.5" width="6" height="6" fill="none" stroke="#d9d9d9" stroke-width="1.3"/>
<rect x="1421.5" y="120.5" width="6" height="6" fill="none" stroke="#d9d9d9" stroke-width="1.3"/>
<rect x="1421" y="128" width="7" height="7" fill="#d9d9d9"/>
<path d="M1434 118 C 1440 117 1441 124 1439 128 C 1438 131 1436 133 1434 134" fill="none" stroke="#d9d9d9" stroke-width="2"/>
<path d="M1431 116 L1436 113 L1436 120Z" fill="#d9d9d9"/>
<!-- properties/3d -->
<path d="M1421.5 169 L1427 166 L1432.5 169 L1432.5 175 L1427 178 L1421.5 175Z" fill="#8a8a8a" stroke="#d9d9d9" stroke-width="1.1"/>
<path d="M1421.5 169 L1427 172 L1432.5 169 M1427 172 V178" fill="none" stroke="#d9d9d9" stroke-width="1.1"/>
<rect x="1435" y="165" width="5.5" height="5.5" fill="#d9d9d9"/>
<rect x="1435" y="172" width="5.5" height="5.5" fill="#d9d9d9"/>
<rect x="1421" y="181" width="19.5" height="5" fill="#d9d9d9"/>
<path d="M1434 182.5 h4 l-2 2z" fill="#323232"/>
<!-- character A| -->
<text x="1421" y="236" font-family="Liberation Sans" font-size="21" fill="#d9d9d9">A</text>
<rect x="1438" y="218" width="1.6" height="18" fill="#d9d9d9"/>
<!-- paragraph -->
<path d="M1431 254 H1438.5 V272 H1437 V256 H1434.5 V272 H1433 V264 C 1427 264 1424 262 1424 259 C 1424 256 1427 254 1431 254Z" fill="#d9d9d9"/>
<!-- brush presets -->
<rect x="1418" y="302" width="2" height="2" fill="#d9d9d9"/><rect x="1422" y="302" width="6" height="1.5" fill="#d9d9d9"/>
<rect x="1418" y="306" width="2" height="2" fill="#d9d9d9"/><rect x="1422" y="306" width="6" height="1.5" fill="#d9d9d9"/>
<rect x="1418" y="310" width="2" height="2" fill="#d9d9d9"/><rect x="1422" y="310" width="6" height="1.5" fill="#d9d9d9"/>
<path d="M1444 305 L1433 316 L1431 314Z" fill="#d9d9d9"/>
<path d="M1430 315 C 1425 316 1425 320 1422 323 C 1428 323 1433 321 1432 317Z" fill="#d9d9d9"/>
<!-- tool presets -->
<path d="M1417 342 C 1420 338 1425 338 1428 340 L1429 342 C 1426 345 1420 345 1417 342Z" fill="#d9d9d9"/>
<rect x="1430" y="341" width="13" height="2" fill="#d9d9d9"/>
<rect x="1418" y="352" width="13" height="2" fill="#d9d9d9"/>
<path d="M1442 347 C 1445 351 1444 357 1441 359 C 1437 357 1433 355 1432 353 C 1435 350 1439 348 1442 347Z" fill="#d9d9d9"/>
</svg>

<div class="a" style="left:1456px;top:94px;width:462px;height:936px;background:#323232"></div>
<div class="a" style="left:1456px;top:94px;width:462px;height:35px;background:#282828"></div>
<div class="a" style="left:1456px;top:94px;width:55px;height:35px;background:#323232"></div>
<div class="a" style="left:1567px;top:94px;width:1px;height:35px;background:#232323"></div>
<div class="a" style="left:1623px;top:94px;width:1px;height:35px;background:#232323"></div>
<div class="a" style="left:1679px;top:94px;width:1px;height:35px;background:#232323"></div>
<div class="a" style="left:1730px;top:94px;width:1px;height:35px;background:#232323"></div>
<div class="a" style="left:1783px;top:94px;width:1px;height:35px;background:#232323"></div>
<div class="t" style="left:1468px;top:104px;font-size:14.5px;color:#e8e8e8">图层</div>
<div class="t" style="left:1523px;top:104px;font-size:14.5px;color:#a8a8a8">调整</div>
<div class="t" style="left:1579px;top:104px;font-size:14.5px;color:#a8a8a8">通道</div>
<div class="t" style="left:1635px;top:104px;font-size:14.5px;color:#a8a8a8">路径</div>
<div class="t" style="left:1691px;top:104px;font-size:14.5px;color:#a8a8a8">库</div>
<div class="t" style="left:1742px;top:104px;font-size:14.5px;color:#a8a8a8">学习</div>
<div class="a" style="left:1898px;top:105px;width:13px;height:11px;background:repeating-linear-gradient(#b0b0b0 0 2px,transparent 2px 3px)"></div>
<!-- filter row -->
<div class="a" style="left:1460px;top:139px;width:108px;height:26px;background:#282828;border:1px solid #3a3a3a;border-radius:2px"></div>
<svg class="a" style="left:1469px;top:143px" width="14" height="16"><circle cx="8" cy="6" r="4" fill="none" stroke="#d0d0d0" stroke-width="1.6"/><path d="M5 9L1.5 13" stroke="#d0d0d0" stroke-width="2" stroke-linecap="round"/></svg>
<div class="t" style="left:1489px;top:143px;font-size:14.5px;color:#e0e0e0">类型</div>
<svg class="a" style="left:1553px;top:150px" width="10" height="7"><path d="M1 1L5 5L9 1" fill="none" stroke="#b0b0b0" stroke-width="1.2"/></svg>
<svg class="a" style="left:1588px;top:142px" width="180" height="24" viewBox="1588 142 180 24">
<rect x="1590" y="145.5" width="13" height="11" fill="none" stroke="#d0d0d0" stroke-width="1.4"/>
<path d="M1592 155 L1595 150 L1597 153 L1599 151 L1601 155Z" fill="#d0d0d0"/>
<circle cx="1626.5" cy="150.7" r="6" fill="none" stroke="#d0d0d0" stroke-width="1.4"/>
<path d="M1630.7 146.5 A6 6 0 0 1 1622.3 154.9Z" fill="#d0d0d0"/>
<path d="M1650 144.5 H1663 V148 H1661.5 V146.5 H1657.8 V156 H1660 V157.5 H1653 V156 H1655.2 V146.5 H1651.5 V148 H1650Z" fill="#d0d0d0"/>
<rect x="1681" y="146" width="12" height="10" fill="none" stroke="#d0d0d0" stroke-width="1.4"/>
<rect x="1679" y="144" width="4" height="4" fill="#d0d0d0"/><rect x="1691" y="144" width="4" height="4" fill="#d0d0d0"/><rect x="1679" y="154" width="4" height="4" fill="#d0d0d0"/><rect x="1691" y="154" width="4" height="4" fill="#d0d0d0"/>
<path d="M1715 144 H1721 L1724 147 V157 H1711 V150 H1715Z" fill="none" stroke="#d0d0d0" stroke-width="1.4"/>
<rect x="1711" y="150" width="6" height="7" fill="#d0d0d0"/>
<rect x="1747.5" y="141.5" width="9" height="20" rx="4.5" fill="#262626" stroke="#3a3a3a" stroke-width="1"/>
<circle cx="1752" cy="147" r="5" fill="#d8d8d8"/>
</svg>
<div class="a" style="left:1456px;top:167px;width:462px;height:1px;background:#2a2a2a"></div>
<!-- blend row -->
<div class="a" style="left:1460px;top:174px;width:146px;height:27px;background:#282828;border:1px solid #3a3a3a;border-radius:2px"></div>
<div class="t" style="left:1470px;top:178px;font-size:14.5px;color:#e0e0e0">正常</div>
<svg class="a" style="left:1592px;top:184px" width="10" height="7"><path d="M1 1L5 5L9 1" fill="none" stroke="#b0b0b0" stroke-width="1.2"/></svg>
<div class="t" style="left:1617px;top:177px;font-size:14.5px;color:#a8a8a8">不透明度:</div>
<div class="a" style="left:1688px;top:176px;width:70px;height:23px;background:#282828;border:1px solid #3a3a3a;border-radius:2px"></div>
<div class="a" style="left:1737px;top:177px;width:1px;height:21px;background:#3a3a3a"></div>
<div class="t" style="left:1691px;top:180px;font-size:13px;color:#e0e0e0">100%</div>
<svg class="a" style="left:1743px;top:184px" width="10" height="7"><path d="M1 1L5 5L9 1" fill="none" stroke="#b0b0b0" stroke-width="1.2"/></svg>
<div class="a" style="left:1456px;top:202px;width:462px;height:1px;background:#2a2a2a"></div>
<!-- lock row -->
<div class="t" style="left:1463px;top:211px;font-size:14.5px;color:#a8a8a8">锁定:</div>
<svg class="a" style="left:1508px;top:208px" width="135" height="26" viewBox="1508 208 135 26">
<rect x="1512.5" y="214.5" width="13" height="13" fill="none" stroke="#d0d0d0" stroke-width="1.2"/>
<path d="M1513 215h3v3h-3zM1519 215h3v3h-3zM1516 218h3v3h-3zM1522 218h3v3h-3zM1513 221h3v3h-3zM1519 221h3v3h-3zM1516 224h3v3h-3zM1522 224h3v3h-3z" fill="#d0d0d0"/>
<path d="M1554 213 L1545 222 L1543 220Z" fill="#d0d0d0"/>
<path d="M1542 221 C 1539 222 1539 225 1537 227 C 1542 227 1545 225 1544 223Z" fill="#d0d0d0"/>
<path d="M1573 212l3 3h-2v4h4v-2l3 3-3 3v-2h-4v4h2l-3 3-3-3h2v-4h-4v2l-3-3 3-3v2h4v-4h-2z" fill="#d0d0d0"/>
<path d="M1594.5 216.5 H1603.5 L1607 220 V226.5 H1594.5 Z" fill="none" stroke="#d0d0d0" stroke-width="1.5"/>
<path d="M1603.5 216.5 V220 H1607" fill="none" stroke="#d0d0d0" stroke-width="1"/>
<path d="M1592 214h1.2M1608.5 214h1.2M1592 228.5h1.2M1608.5 228.5h1.2M1596 228.5h1.2M1605 228.5h1.2M1596 214h1.2" stroke="#d0d0d0" stroke-width="1.2"/>
<rect x="1623" y="219" width="12" height="9" fill="#d0d0d0"/>
<path d="M1625.5 219 V216 A3.5 3.5 0 0 1 1632.5 216 V219" fill="none" stroke="#d0d0d0" stroke-width="1.6"/>
<circle cx="1629" cy="223.5" r="1.2" fill="#323232"/>
</svg>
<div class="t" style="left:1648px;top:212px;font-size:14.5px;color:#a8a8a8">填充:</div>
<div class="a" style="left:1688px;top:210px;width:70px;height:23px;background:#282828;border:1px solid #3a3a3a;border-radius:2px"></div>
<div class="a" style="left:1737px;top:211px;width:1px;height:21px;background:#3a3a3a"></div>
<div class="t" style="left:1691px;top:214px;font-size:13px;color:#e0e0e0">100%</div>
<svg class="a" style="left:1743px;top:218px" width="10" height="7"><path d="M1 1L5 5L9 1" fill="none" stroke="#b0b0b0" stroke-width="1.2"/></svg>
<!-- layer rows -->
<div class="a" style="left:1456px;top:238px;width:462px;height:107px;background:#2b2b2b"></div>
<div class="a" style="left:1456px;top:241px;width:443px;height:50px;background:#323232"></div>
<div class="a" style="left:1494px;top:241px;width:405px;height:50px;background:#2f4a68"></div>
<div class="a" style="left:1456px;top:291px;width:443px;height:1px;background:#282828"></div>
<div class="a" style="left:1456px;top:292px;width:443px;height:51px;background:#323232"></div>
<div class="a" style="left:1493px;top:241px;width:1px;height:102px;background:#282828"></div>
<svg class="a" style="left:1464px;top:258px" width="22" height="16"><path d="M2 8 C 6 2 16 2 20 8 C 16 14 6 14 2 8Z" fill="#d6d6d6"/><circle cx="11" cy="8" r="3.2" fill="#323232"/><circle cx="11" cy="8" r="1.6" fill="#d6d6d6"/></svg>
<svg class="a" style="left:1464px;top:309px" width="22" height="16"><path d="M2 8 C 6 2 16 2 20 8 C 16 14 6 14 2 8Z" fill="#d6d6d6"/><circle cx="11" cy="8" r="3.2" fill="#323232"/><circle cx="11" cy="8" r="1.6" fill="#d6d6d6"/></svg>
<!-- thumb 1 -->
<svg class="a" style="left:1495px;top:243px" width="38" height="48" viewBox="0 0 38 48">
<defs><pattern id="chk" width="4" height="4" patternUnits="userSpaceOnUse"><rect width="4" height="4" fill="#f6f6f6"/><rect width="2" height="2" fill="#dcdcdc"/><rect x="2" y="2" width="2" height="2" fill="#dcdcdc"/></pattern></defs>
<path d="M1.5 15V1.5H13 M24 1.5H36.5V15 M1.5 31V45.5H13 M24 45.5H36.5V31" fill="none" stroke="#f0f0f0" stroke-width="1.2"/>
<rect x="4.75" y="4.5" width="29.25" height="37.5" fill="url(#chk)"/>
<g fill="#ff0000"><rect x="6.8" y="8.6" width="7" height="7.2" rx="0.8"/><rect x="16.2" y="8.6" width="7" height="7.2" rx="0.8"/><rect x="25" y="8.6" width="7" height="7.2" rx="0.8"/><rect x="6.8" y="19.6" width="7" height="7.2" rx="0.8"/><rect x="16.2" y="19.6" width="7" height="7.2" rx="0.8"/><rect x="25" y="19.6" width="7" height="7.2" rx="0.8"/><rect x="6.8" y="29.5" width="7" height="7.2" rx="0.8"/><rect x="16.2" y="29.5" width="7" height="7.2" rx="0.8"/><rect x="25" y="29.5" width="7" height="7.2" rx="0.8"/></g>
</svg>
<div class="t" style="left:1541px;top:259px;font-size:14.5px;word-spacing:1.5px;color:#e6e6e6">矩形 1 拷贝 4</div>
<div class="a" style="left:1499px;top:299px;width:30px;height:39px;background:#fff;border:1px solid #1e1e1e"></div>
<div class="t" style="left:1541px;top:311px;font-size:14.5px;color:#e0e0e0">背景</div>
<svg class="a" style="left:1865px;top:309px" width="16" height="18"><path d="M4.5 8V5.5A3.5 3.5 0 0 1 11.5 5.5V8" fill="none" stroke="#d0d0d0" stroke-width="1.5"/><rect x="2.5" y="8" width="11" height="9" fill="none" stroke="#d0d0d0" stroke-width="1.4"/><rect x="7" y="11" width="2" height="2.5" fill="#d0d0d0"/></svg>
<!-- empty area -->
<div class="a" style="left:1456px;top:345px;width:462px;height:653px;background:#2b2b2b"></div>
<div class="a" style="left:1456px;top:998px;width:454px;height:32px;background:#323232"></div><div class="a" style="left:1910px;top:978px;width:10px;height:52px;background:#1a1c1e"></div>
<div class="a" style="left:1914px;top:980px;width:2px;height:47px;background:linear-gradient(#5a5a2a,#3b5a2e 30%,#3b5a2e)"></div>
<svg class="a" style="left:1660px;top:1004px" width="230" height="22" viewBox="1660 1004 230 22">
<path d="M1671 1011 H1667 A3.5 3.5 0 0 0 1667 1018 H1671 M1677 1011 H1681 A3.5 3.5 0 0 1 1681 1018 H1677 M1669 1014.5 H1679" fill="none" stroke="#9a9a9a" stroke-width="1.6"/>
<text x="1701" y="1020" font-family="Liberation Serif" font-style="italic" font-size="17" fill="#d0d0d0">fx</text>
<path d="M1715 1022 h4 l-2 2z" fill="#d0d0d0"/>
<rect x="1734" y="1008" width="16" height="12" fill="#d0d0d0"/>
<circle cx="1742" cy="1014" r="3.5" fill="#323232"/>
<circle cx="1775" cy="1014" r="6" fill="none" stroke="#d0d0d0" stroke-width="1.5"/>
<path d="M1779.2 1009.8 A6 6 0 0 1 1770.8 1018.2Z" fill="#d0d0d0"/>
<path d="M1781 1022 h4 l-2 2z" fill="#d0d0d0"/>
<path d="M1802 1009 H1808 L1809 1010 H1817 V1020 H1802Z" fill="#d0d0d0"/>
<path d="M1837.7 1008.7 H1849.3 V1020.3 H1842 L1837.7 1016 Z M1837.7 1016 H1842 V1020.3" fill="none" stroke="#d0d0d0" stroke-width="1.4"/>
<path d="M1870 1010 H1884 M1875 1010 V1007.5 H1879 V1010 M1871.5 1010 V1021 H1882.5 V1010 M1874.5 1012.5 V1019 M1877 1012.5 V1019 M1879.5 1012.5 V1019" fill="none" stroke="#d0d0d0" stroke-width="1.3"/>
</svg>

<div class="a" style="left:0;top:1030px;width:1920px;height:50px;background:linear-gradient(90deg,#1a2330 0%,#1c2632 28%,#1a2030 42%,#131626 55%,#0e101e 65%,#0d0f1c 80%,#0c0e18 100%)"></div>
<div class="a" style="left:0;top:1030px;width:60px;height:50px;background:#0b0c17"></div>
<svg class="a" style="left:19px;top:1045px" width="22" height="21"><path d="M0 3 L9 1.8 V10 H0Z M10.5 1.6 L21 0 V10 H10.5Z M0 11.3 H9 V19.3 L0 18Z M10.5 11.3 H21 V21 L10.5 19.5Z" fill="#fff"/></svg>
<div class="a" style="left:60px;top:1030px;width:430px;height:50px;background:#f0f0f0;border-top:1px solid #a8a8a8"></div>
<div class="a" style="left:72px;top:1043px;width:26px;height:26px;border:3.5px solid #111;border-radius:50%"></div>
<div class="t" style="left:110px;top:1046px;font-size:19px;color:#3c3c3c">在这里输入你要搜索的内容</div>
<svg class="a" style="left:455px;top:1044px" width="18" height="24"><rect x="5" y="1.5" width="8" height="14" rx="4" fill="none" stroke="#333" stroke-width="2"/><path d="M2 11 C 2 17 16 17 16 11 M9 17 V21 M5 21.5 H13" fill="none" stroke="#333" stroke-width="1.8"/></svg>
<!-- task view -->
<svg class="a" style="left:508px;top:1044px" width="26" height="22"><path d="M1 2H16 M1 20H16 M4 5V17H13V5Z" fill="none" stroke="#e8e8e8" stroke-width="1.5"/><path d="M20 2V5 M20 8V14 M20 17V20" stroke="#e8e8e8" stroke-width="2"/></svg>
<!-- power -->
<svg class="a" style="left:574px;top:1045px" width="20" height="20"><path d="M6 5 A7 7 0 1 0 14 5" fill="none" stroke="#f0f0f0" stroke-width="2"/><path d="M10 2V10" stroke="#f0f0f0" stroke-width="2"/></svg>
<!-- edge -->
<svg class="a" style="left:633px;top:1041px" width="28" height="28" viewBox="0 0 28 28"><path d="M3 14 C 3 6 9 2 15 2 C 22 2 26 7 26 14 V16 H9 C 9 21 13 23 17 23 C 21 23 24 21 25 20 V25 C 22 27 19 27 16 27 C 8 27 3 21 3 14 Z M9 11 H19 C 19 8 17 6 14 6 C 11 6 9 8 9 11Z" fill="#1f7fe0"/></svg>
<!-- explorer -->
<svg class="a" style="left:693px;top:1041px" width="31" height="28" viewBox="0 0 31 28"><path d="M1 2 H11 L13 4 H30 V27 H1Z" fill="#e8b949"/><rect x="1" y="8" width="29" height="19" fill="#f5d268"/><path d="M8 27 V17 H23 V27 H19 V21 H12 V27Z" fill="#3b9de0"/></svg>
<!-- store -->
<svg class="a" style="left:755px;top:1039px" width="30" height="31" viewBox="0 0 30 31"><path d="M10 8 V5 A5 4 0 0 1 20 5 V8" fill="none" stroke="#c8c8c8" stroke-width="2"/><rect x="1" y="8" width="28" height="22" fill="#f2f2f2"/><rect x="9" y="13" width="5.5" height="5.5" fill="#f25022"/><rect x="15.5" y="13" width="5.5" height="5.5" fill="#7fba00"/><rect x="9" y="19.5" width="5.5" height="5.5" fill="#00a4ef"/><rect x="15.5" y="19.5" width="5.5" height="5.5" fill="#ffb900"/></svg>
<!-- mail -->
<svg class="a" style="left:816px;top:1041px" width="33" height="26" viewBox="0 0 33 26"><path d="M1 8 L16.5 1 L32 8 V25 H1Z" fill="#fafafa"/><path d="M1 8 L16.5 15 L32 8" fill="none" stroke="#1a1f2e" stroke-width="1.5"/><path d="M10 21 L17 13 L32 25" fill="none" stroke="#1a1f2e" stroke-width="1.5"/></svg>
<!-- ps active -->
<div class="a" style="left:865px;top:1030px;width:61px;height:50px;background:#44464f"></div>
<div class="a" style="left:865px;top:1077px;width:61px;height:3px;background:#7ab8ec"></div>
<div class="a" style="left:881px;top:1041px;width:28px;height:28px;background:#001e36;border:2px solid #31a8ff"></div>
<div class="t" style="left:884px;top:1046px;font-size:16px;font-weight:bold;color:#31a8ff">Ps</div>
<!-- indicators -->
<div class="a" style="left:683px;top:1077px;width:51px;height:3px;background:#7ab8ec"></div>
<div class="a" style="left:930px;top:1077px;width:51px;height:3px;background:#7ab8ec"></div>
<div class="a" style="left:992px;top:1077px;width:51px;height:3px;background:#7ab8ec"></div>
<!-- film -->
<svg class="a" style="left:942px;top:1039px" width="30" height="31" viewBox="0 0 30 31"><rect x="2" y="12" width="26" height="18" fill="#fafafa"/><path d="M1.5 5 L27 0 L28 6 L2.5 11Z" fill="#fafafa"/><path d="M7 4 L10 9 M13 3 L16 8 M19 2 L22 7" stroke="#1a1f2e" stroke-width="2"/></svg>
<!-- photos -->
<svg class="a" style="left:1004px;top:1040px" width="30" height="28" viewBox="0 0 30 28"><rect x="1" y="1" width="28" height="26" fill="#fafafa"/><path d="M3 3 H27 V22 L19 12 L13 18 L9 14 L3 21Z" fill="#1a1f2e"/></svg>
<!-- tray -->
<svg class="a" style="left:1456px;top:1043px" width="26" height="24"><circle cx="15" cy="5.5" r="4" fill="none" stroke="#fff" stroke-width="1.5"/><path d="M8 20 C 8 14 11 11 15 11 C 19 11 22 14 22 20" fill="none" stroke="#fff" stroke-width="1.5"/><circle cx="7" cy="11" r="3" fill="none" stroke="#fff" stroke-width="1.5"/><path d="M2 21 C 2 17 4 15 7 15" fill="none" stroke="#fff" stroke-width="1.5"/></svg>
<svg class="a" style="left:1503px;top:1048px" width="20" height="12"><path d="M2 10 L10 2 L18 10" fill="none" stroke="#fff" stroke-width="1.6"/></svg>
<svg class="a" style="left:1531px;top:1046px" width="24" height="16"><path d="M5 14 C 1 14 1 9 5 9 C 5 5 9 3 12 5 C 14 2 20 3 20 8 C 24 8 24 14 20 14Z" fill="#9aa0a8"/></svg>
<svg class="a" style="left:1562px;top:1045px" width="24" height="18"><rect x="2" y="6" width="18" height="10" fill="none" stroke="#fff" stroke-width="1.5"/><rect x="20" y="9" width="2" height="4" fill="#fff"/><rect x="4" y="8" width="14" height="6" fill="#fff"/><path d="M5 1V6 M3 3H7" stroke="#fff" stroke-width="1.3"/></svg>
<svg class="a" style="left:1592px;top:1045px" width="24" height="22"><path d="M8 19 A10 10 0 0 1 20 7 M8 15 A6 6 0 0 1 16 9 M12 19 A3 3 0 0 1 16 15" fill="none" stroke="#fff" stroke-width="1.5"/><path d="M1 21 L5.5 13 L10 21Z" fill="#f5b800"/><rect x="5" y="16" width="1" height="3" fill="#000"/></svg>
<svg class="a" style="left:1621px;top:1044px" width="24" height="22"><path d="M2 8 H6 L11 3 V19 L6 14 H2Z" fill="none" stroke="#fff" stroke-width="1.5"/><path d="M14 8 C 16 10 16 12 14 14 M17 5 C 20 9 20 13 17 17 M20 2 C 24 8 24 14 20 20" fill="none" stroke="#9aa0a8" stroke-width="1.4"/></svg>
<svg class="a" style="left:1656px;top:1043px" width="26" height="24"><path d="M4 20 L16 6 L19 9 L7 22 L3 23Z M14 4 C 16 1 20 1 22 4 C 23 6 22 8 20 9 M16 12 C 18 13 22 13 24 10" fill="none" stroke="#fff" stroke-width="1.5"/></svg>
<div class="t" style="left:1692px;top:1046px;font-size:19px;color:#fff">英</div>
<div class="a" style="left:1729px;top:1045px;width:19px;height:20px;background:#fff"></div>
<div class="t" style="left:1729px;top:1046px;font-size:18px;color:#0c0f1c">拼</div>
<div class="t" style="left:1787px;top:1036px;font-size:16px;color:#fff">16:31</div>
<div class="t" style="left:1774px;top:1058px;font-size:16px;letter-spacing:0.7px;color:#fff">2019/4/2</div>
<svg class="a" style="left:1868px;top:1044px" width="22" height="22"><path d="M1 1 H20 V17 H12 L10.5 19.5 L9 17 H1Z" fill="none" stroke="#fff" stroke-width="1.5"/></svg>
<div class="a" style="left:1914px;top:1030px;width:1px;height:50px;background:#6a6e78"></div>

</body></html>
